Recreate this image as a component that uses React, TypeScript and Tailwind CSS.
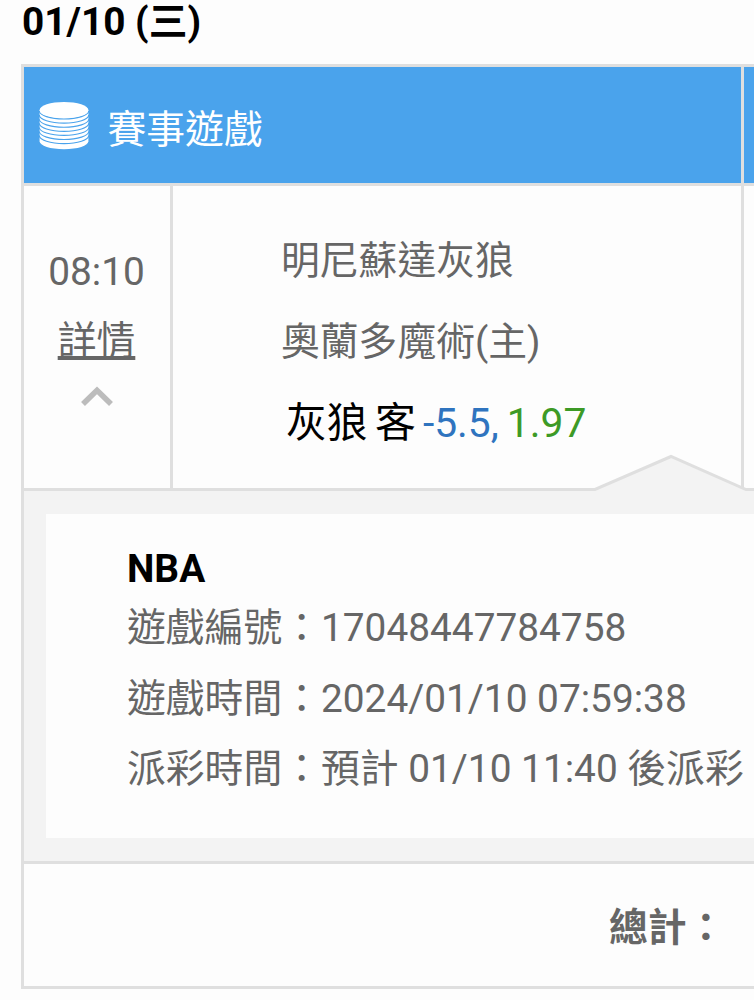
import type { ReactNode } from "react";

function CoinStack() {
  return (
    <svg className="h-[50px] w-[50px] shrink-0" viewBox="0 0 50 50" fill="none">
      <path d="M.6 9v31.3c0 4.4 10.9 8 24.4 8s24.4-3.6 24.4-8V9z" fill="#fff" />
      <g stroke="#4aa3ec" strokeWidth="1.15">
        <path d="M.3 10c0 4.4 11 8 24.7 8s24.7-3.6 24.7-8" />
        <path d="M.3 14.1c0 4.4 11 8 24.7 8s24.7-3.6 24.7-8" />
        <path d="M.3 18.2c0 4.4 11 8 24.7 8s24.7-3.6 24.7-8" />
        <path d="M.3 22.3c0 4.4 11 8 24.7 8s24.7-3.6 24.7-8" />
        <path d="M.3 26.4c0 4.4 11 8 24.7 8s24.7-3.6 24.7-8" />
        <path d="M.3 30.5c0 4.4 11 8 24.7 8s24.7-3.6 24.7-8" />
        <path d="M.3 34.6c0 4.4 11 8 24.7 8s24.7-3.6 24.7-8" />
      </g>
      <ellipse cx="25" cy="9" rx="24.4" ry="8.1" fill="#fff" />
    </svg>
  );
}

function DetailRow({ label, children }: { label: string; children: ReactNode }) {
  return (
    <div className="flex h-[70.6px] whitespace-pre leading-[70px]">
      <dt>{label}：</dt>
      <dd>{children}</dd>
    </div>
  );
}

export default function App() {
  return (
    <main className="h-[1000px] w-[754px] overflow-hidden bg-[#fdfdfd] font-[Roboto,'Noto_Sans_CJK_TC',sans-serif] text-[38.8px] text-[#666]">
      <h1 className="h-[64px] pl-[22px] leading-[44px] font-bold text-black">01/10 (三)</h1>

      <section className="ml-[21px] w-[760px] border-[3px] border-[#dfdfdf]">
        <header className="flex h-[119px] border-b-[3px] border-[#dfdfdf] text-white">
          <div className="flex w-[717px] items-center bg-[#4aa3ec] pt-[2px] pl-[15px]">
            <CoinStack />
            <h2 className="pt-[7px] pl-[18.5px] leading-[60px]">賽事遊戲</h2>
          </div>
          <div className="grow border-l-[3px] border-[#dfdfdf] bg-[#4aa3ec]" />
        </header>

        <div className="relative flex h-[302px]">
          <div className="flex w-[145px] flex-col items-center pt-[52px]">
            <time className="h-[68px] leading-[68px]">08:10</time>
            <a className="h-[68px] leading-[69px] underline decoration-[3.5px] underline-offset-[2px]">詳情</a>
            <svg className="mt-[12px] h-[24px] w-[36px]" viewBox="0 0 36 24" fill="none">
              <path d="M4 18 18 4.3 32 18" stroke="#bcbcbc" strokeWidth="5.6" />
            </svg>
          </div>
          <div className="ml-px w-[571px] border-l-[3px] border-[#dfdfdf] pt-[34px] pl-[108px]">
            <p className="h-[81px] leading-[81px]">明尼蘇達灰狼</p>
            <p className="h-[81px] leading-[81px]">奧蘭多魔術(主)</p>
            <p className="flex h-[81px] pl-[5px] text-[40.8px] leading-[82px] text-black">
              <span>灰狼</span>
              <span className="pl-[7.5px]">客</span>
              <span className="pl-[7px] text-[#2f74bf]">-5.5,</span>
              <span className="pl-[8px] text-[#3d9a26]">1.97</span>
            </p>
          </div>
          <div className="grow border-l-[3px] border-[#dfdfdf]" />
          <svg className="absolute top-[267px] left-[565px] z-10 h-[40px] w-[165px]" viewBox="0 0 165 40" fill="none">
            <path d="M6 36.5 82 3.5 157 36.5V40H6z" fill="#f3f3f3" />
            <path d="M0 36.5H6L82 3.5 157 36.5H165" stroke="#dfdfdf" strokeWidth="3" />
          </svg>
        </div>

        <div className="h-[376px] border-y-[3px] border-[#dfdfdf] bg-[#f3f3f3] pt-[23px] pl-[22px]">
          <article className="h-[324px] bg-[#fdfdfd] pt-[31px] pl-[81px]">
            <h3 className="h-[48px] leading-[48px] font-bold text-black">NBA</h3>
            <dl>
              <DetailRow label="遊戲編號">17048447784758</DetailRow>
              <DetailRow label="遊戲時間">2024/01/10 07:59:38</DetailRow>
              <DetailRow label="派彩時間">預計 01/10 11:40 後派彩</DetailRow>
            </dl>
          </article>
        </div>

        <footer className="h-[122px] pl-[585px] leading-[127px] font-bold">總計：</footer>
      </section>
    </main>
  );
}
